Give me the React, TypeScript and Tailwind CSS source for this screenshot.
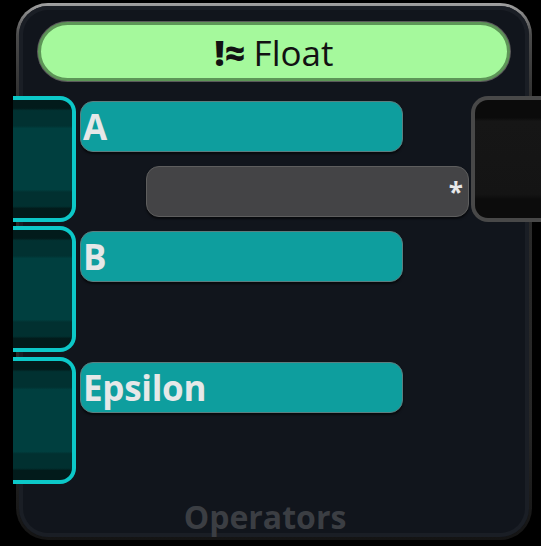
import React from "react";

const font = { fontFamily: '"Open Sans", "DejaVu Sans", sans-serif' };

function InSocket({ h }: { h: string }) {
  return (
    <div
      className={`${h} w-[63px] shrink-0 rounded-r-[16px] border-[4px] border-l-0 border-[#0cc8c8] bg-[linear-gradient(to_bottom,#021b1b_0%,#021b1b_7%,#013131_9%,#013131_22%,#003f3f_24%,#003f3f_76%,#013030_78%,#013030_90%,#021b1b_92%,#021b1b_100%)]`}
    />
  );
}

function Field({ label }: { label: string }) {
  return (
    <div className="mt-[5px] flex h-[51px] w-[323px] items-center rounded-[13px] border-[1.5px] border-[#5c7f80] bg-[#0e9e9e] pl-[2px] shadow-[0_2px_2px_rgba(0,0,0,0.55)]">
      <span className="text-[35px] font-bold leading-none tracking-[-0.3px] text-[#e6e8e8]">
        {label}
      </span>
    </div>
  );
}

export default function App() {
  return (
    <div className="h-[546px] w-[541px] overflow-hidden bg-black" style={font}>
      <div className="ml-[16px] mt-[3px] h-[537px] w-[516px] rounded-[32px] bg-[linear-gradient(to_bottom,#a2a2a2_0%,#4a4a4a_6%,#2a2a2a_20%,#262626_80%,#141414_100%)] p-[3px]">
        <div className="flex h-full w-full flex-col rounded-[29px] bg-[#11151c] shadow-[inset_0_0_0_4px_#1a1e25]">
          <div className="mx-[19px] mt-[16px] flex h-[59px] items-center justify-center rounded-full border-[3px] border-[#5d9657] bg-[#a5f99c] shadow-[0_0_0_1px_#5a5a5a]">
            <span className="pt-[2px] text-[35px] leading-none text-[#121212]">
              <b className="font-extrabold">!≈</b> Float
            </span>
          </div>

          <div className="-ml-[6px] mt-[15px] flex">
            <InSocket h="h-[126px]" />
            <div className="ml-[4px] flex w-[389px] shrink-0 flex-col">
              <Field label="A" />
              <div className="ml-[66px] mt-[14px] flex h-[51px] w-[323px] items-center justify-end rounded-[13px] border-[1.5px] border-[#5e5e5e] bg-[#444446] pr-[5px] shadow-[0_2px_2px_rgba(0,0,0,0.55)]">
                <span className="text-[26px] font-bold leading-none text-[#e8e8e8]">*</span>
              </div>
            </div>
            <div className="ml-[2px] h-[126px] w-[80px] shrink-0 rounded-l-[17px] border-[4px] border-r-0 border-[#484848] bg-[linear-gradient(to_bottom,#0b0b0b_0%,#0b0b0b_15%,#161616_18%,#141414_80%,#0c0c0c_84%,#0c0c0c_100%)]" />
          </div>

          <div className="-ml-[6px] mt-[4px] flex">
            <InSocket h="h-[126px]" />
            <div className="ml-[4px] flex flex-col">
              <Field label="B" />
            </div>
          </div>

          <div className="-ml-[6px] mt-[5px] flex">
            <InSocket h="h-[127px]" />
            <div className="ml-[4px] flex flex-col">
              <Field label="Epsilon" />
            </div>
          </div>

          <div className="mt-auto pb-[4px] pr-[18px] text-center text-[32px] font-bold leading-none text-[#3b3e43]">
            Operators
          </div>
        </div>
      </div>
    </div>
  );
}
